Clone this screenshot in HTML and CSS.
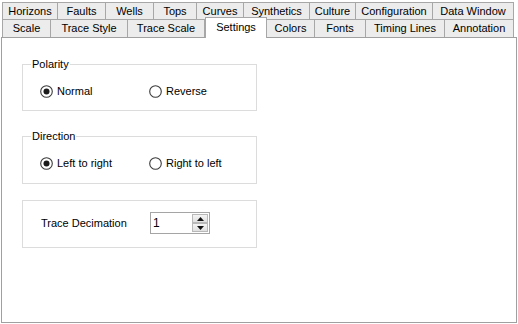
FILE: index.html
```html
<!DOCTYPE html>
<html>
<head>
<meta charset="utf-8">
<link rel="stylesheet" href="styles.css">
</head>
<body>
<div class="dialog">
  <div class="tabstrip">
    <div class="row row1">
      <div class="tab t-horizons">Horizons</div>
      <div class="tab t-faults">Faults</div>
      <div class="tab t-wells">Wells</div>
      <div class="tab t-tops">Tops</div>
      <div class="tab t-curves">Curves</div>
      <div class="tab t-synth">Synthetics</div>
      <div class="tab t-culture">Culture</div>
      <div class="tab t-config">Configuration</div>
      <div class="tab t-data">Data Window</div>
    </div>
    <div class="row row2">
      <div class="tab t-scale">Scale</div>
      <div class="tab t-tstyle">Trace Style</div>
      <div class="tab t-tscale">Trace Scale</div>
      <div class="tab t-settings selected">Settings</div>
      <div class="tab t-colors">Colors</div>
      <div class="tab t-fonts">Fonts</div>
      <div class="tab t-timing">Timing Lines</div>
      <div class="tab t-annot">Annotation</div>
    </div>
  </div>
  <div class="panel">
    <fieldset class="group first">
      <legend>Polarity</legend>
      <div class="choices">
        <label class="radio"><svg width="13" height="13" viewBox="0 0 13 13"><circle cx="6.5" cy="6.5" r="5.8" fill="#fff" stroke="#3a3a3a" stroke-width="1.1"/><circle cx="6.5" cy="6.5" r="3" fill="#1a1a1a"/></svg><span>Normal</span></label>
        <label class="radio"><svg width="13" height="13" viewBox="0 0 13 13"><circle cx="6.5" cy="6.5" r="5.8" fill="#fff" stroke="#3a3a3a" stroke-width="1.1"/></svg><span>Reverse</span></label>
      </div>
    </fieldset>
    <fieldset class="group second">
      <legend>Direction</legend>
      <div class="choices">
        <label class="radio"><svg width="13" height="13" viewBox="0 0 13 13"><circle cx="6.5" cy="6.5" r="5.8" fill="#fff" stroke="#3a3a3a" stroke-width="1.1"/><circle cx="6.5" cy="6.5" r="3" fill="#1a1a1a"/></svg><span>Left to right</span></label>
        <label class="radio"><svg width="13" height="13" viewBox="0 0 13 13"><circle cx="6.5" cy="6.5" r="5.8" fill="#fff" stroke="#3a3a3a" stroke-width="1.1"/></svg><span>Right to left</span></label>
      </div>
    </fieldset>
    <div class="box">
      <span class="field-label">Trace Decimation</span>
      <div class="spinner">
        <span class="value">1</span>
        <div class="spin-buttons">
          <div class="spin-btn"><svg width="7" height="4" viewBox="0 0 7 4"><path d="M0 4 L3.5 0 L7 4 Z" fill="#111"/></svg></div>
          <div class="spin-btn"><svg width="7" height="4" viewBox="0 0 7 4"><path d="M0 0 L7 0 L3.5 4 Z" fill="#111"/></svg></div>
        </div>
      </div>
    </div>
  </div>
</div>
</body>
</html>
```
FILE: styles.css
```css
* { box-sizing: border-box; }
html, body { margin: 0; padding: 0; }
body {
  background: #ffffff;
  font-family: "Liberation Sans", Arial, sans-serif;
  font-size: 11px;
  color: #000;
}
.dialog { width: 518px; height: 324px; }
.tabstrip { padding: 2px 2px 0 2px; }
.row { display: flex; align-items: flex-start; }
.row1 { height: 17px; }
.row2 { height: 18px; }
.tab {
  flex: 0 0 auto;
  background: #ececec;
  border: 1px solid #a7a7a7;
  border-bottom: none;
  text-align: center;
  white-space: nowrap;
}
.row1 .tab { height: 17px; line-height: 16px; }
.row2 .tab { height: 18px; line-height: 17px; }
.tab + .tab { border-left: none; }
.t-horizons { width: 56px; }
.t-faults { width: 48px; }
.t-wells { width: 48px; }
.t-tops { width: 43px; }
.t-curves { width: 47px; }
.t-synth { width: 66px; }
.t-culture { width: 46px; }
.t-config { width: 77px; }
.t-data { width: 81px; }
.t-scale { width: 49px; }
.t-tstyle { width: 77px; }
.t-tscale { width: 77px; }
.t-settings { width: 62px; }
.t-colors { width: 48px; }
.t-fonts { width: 51px; }
.t-timing { width: 79px; }
.t-annot { width: 69px; }
.row2 .tab.selected {
  position: relative;
  z-index: 1;
  background: #fff;
  height: 21px;
  margin-top: -2px;
  line-height: 18px;
  border-left: 1px solid #a7a7a7;
}
.row2 .selected + .tab { border-left: 1px solid #a7a7a7; margin-left: -1px; width: 49px; }
.panel {
  margin-left: 1px;
  width: 516px;
  height: 286px;
  background: #fff;
  border: 1px solid #a0a0a0;
  padding: 20px 0 0 20px;
}
.group {
  margin: 0;
  width: 235px;
  border: 1px solid #dcdcdc;
  padding: 14px 0 12px 8px;
}
.group.second { margin-top: 19px; padding-bottom: 13px; }
.group legend {
  padding: 0 1px;
  line-height: 13px;
  font-size: 11px;
}
.choices {
  display: grid;
  grid-template-columns: 109px auto;
  margin-left: 9px;
  height: 13px;
}
.radio {
  display: flex;
  align-items: center;
  gap: 4px;
  height: 13px;
  line-height: 13px;
}
.radio svg { display: block; flex: none; }
.box {
  margin-top: 16px;
  width: 235px;
  border: 1px solid #dcdcdc;
  padding: 11px 0 13px 18px;
  display: grid;
  grid-template-columns: 109px 60px;
  align-items: center;
}
.field-label { line-height: 13px; }
.spinner {
  width: 60px;
  height: 22px;
  border: 1px solid #a5a5a5;
  display: flex;
  align-items: center;
  padding: 0 1px 0 2px;
}
.value { flex: 1; font-size: 12px; line-height: 14px; }
.spin-buttons {
  display: flex;
  flex-direction: column;
  width: 16px;
}
.spin-btn {
  height: 9px;
  border: 1px solid #b8b8b8;
  background: linear-gradient(#f4f4f4, #e0e0e0);
  display: flex;
  align-items: center;
  justify-content: center;
}
.spin-btn svg { display: block; }
```
